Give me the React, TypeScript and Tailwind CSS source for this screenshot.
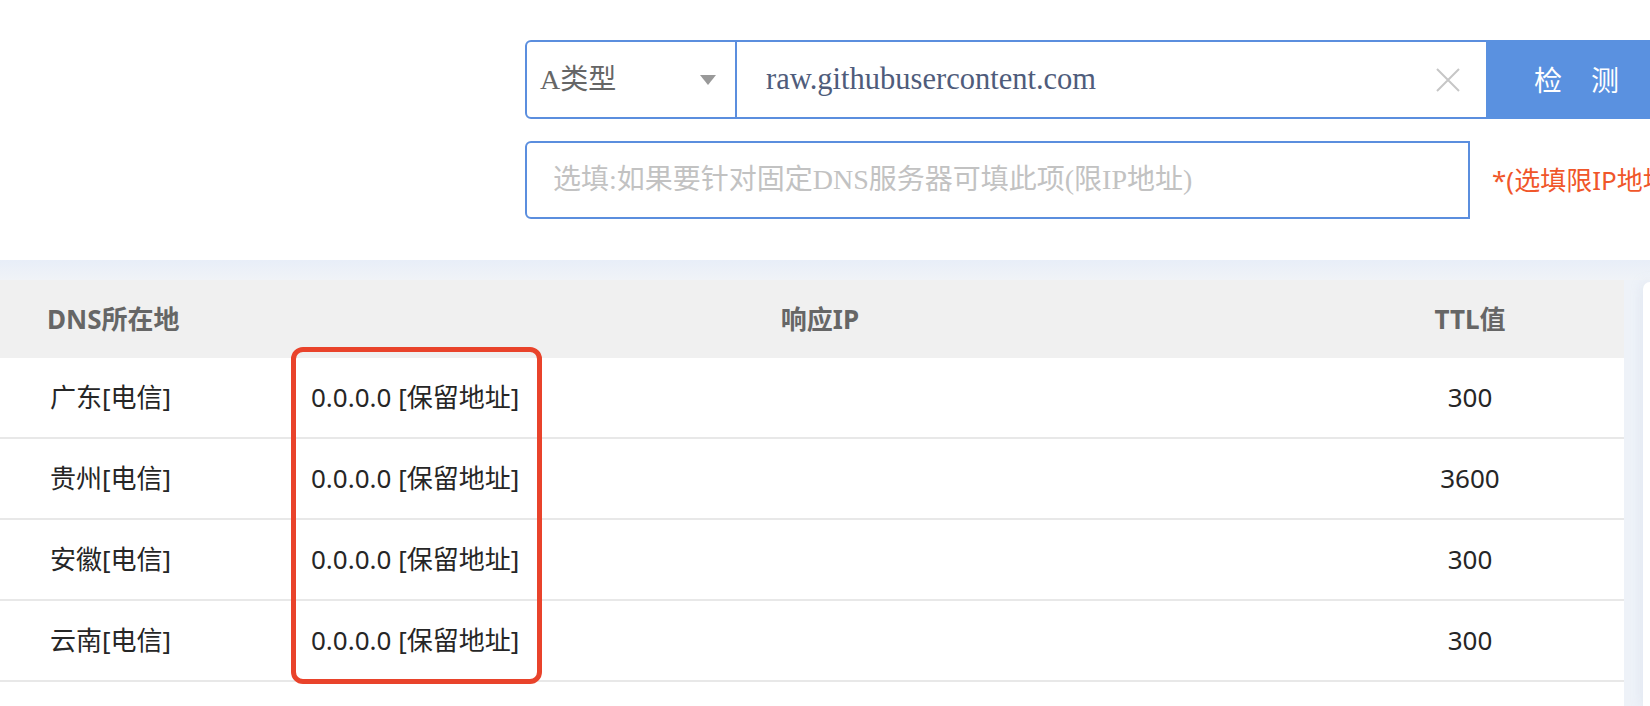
const rows = [
  { place: '广东[电信]', ip: '0.0.0.0 [保留地址]', ttl: '300' },
  { place: '贵州[电信]', ip: '0.0.0.0 [保留地址]', ttl: '3600' },
  { place: '安徽[电信]', ip: '0.0.0.0 [保留地址]', ttl: '300' },
  { place: '云南[电信]', ip: '0.0.0.0 [保留地址]', ttl: '300' },
];

const serif = 'font-["Liberation_Serif","Noto_Sans_CJK_SC",serif]';
const sans = 'font-["Noto_Sans","Noto_Sans_CJK_SC",sans-serif]';

function SearchForm() {
  return (
    <section className="h-[260px] shrink-0 bg-white pl-[525px] pt-[40px]">
      <div className="flex h-[79px]">
        <div
          className={`flex w-[212px] shrink-0 items-center justify-between rounded-l-[6px] border-2 border-[#5b8ede] pl-[13px] pr-[19px] text-[28px] text-[#666] ${serif}`}
        >
          <span>A类型</span>
          <svg width="16" height="10" viewBox="0 0 16 10" aria-hidden>
            <path d="M0 0h16L8 10z" fill="#999" />
          </svg>
        </div>
        <div className="flex w-[749px] shrink-0 items-center justify-between border-y-2 border-[#5b8ede] pl-[29px] pr-[26px]">
          <span className={`text-[30.5px] text-[#4f5c7b] ${serif}`}>raw.githubusercontent.com</span>
          <svg width="24" height="24" viewBox="0 0 24 24" aria-hidden>
            <path d="M1 1L23 23M23 1L1 23" stroke="#c6c6c6" strokeWidth="2" />
          </svg>
        </div>
        <button
          className={`flex w-[180px] shrink-0 items-center gap-[29px] bg-[#5a91e0] pl-[48px] text-[28px] text-white ${sans}`}
        >
          <span>检</span>
          <span>测</span>
        </button>
      </div>

      <div className="mt-[22px] flex items-center">
        <div
          className={`flex h-[78px] w-[945px] shrink-0 items-center rounded-l-[6px] border-2 border-[#5b8ede] pl-[26px] text-[28px] text-[#c2c2c2] ${serif}`}
        >
          选填:如果要针对固定DNS服务器可填此项(限IP地址)
        </div>
        <span className={`ml-[22px] whitespace-nowrap text-[26px] text-[#f0562a] ${sans}`}>
          *(选填限IP地址)
        </span>
      </div>
    </section>
  );
}

function ResultTable() {
  return (
    <div className={`w-[1624px] shrink-0 bg-white ${sans}`}>
      <div className="flex h-[78px] items-center bg-[#f0f0f0] text-[26px] font-bold text-[#666]">
        <div className="w-[310px] pl-[47px]">DNS所在地</div>
        <div className="w-[1006px] pl-[14px] text-center">响应IP</div>
        <div className="w-[308px] text-center">TTL值</div>
      </div>
      {rows.map((row) => (
        <div
          key={row.place + row.ttl}
          className="flex h-[81px] items-center border-b-2 border-[#e8e8e8] text-[26px] text-[#262626]"
        >
          <div className="w-[310px] pl-[50px]">{row.place}</div>
          <div className="w-[1006px] pl-[1px]">{row.ip}</div>
          <div className="w-[308px] text-center">{row.ttl}</div>
        </div>
      ))}
    </div>
  );
}

export default function App() {
  return (
    <div className="relative flex h-[706px] w-[1650px] flex-col overflow-hidden bg-[#eef2f8]">
      <SearchForm />
      <div className="h-[20px] shrink-0 bg-gradient-to-b from-[#e8eef8] to-[#f0f3f7]" />
      <div className="flex flex-1 gap-[19px]">
        <ResultTable />
        <div className="mt-[2px] flex-1 rounded-tl-[8px] bg-white shadow-[0_0_12px_rgba(180,195,220,0.35)]" />
      </div>

      <div className="absolute left-[291px] top-[347px] h-[337px] w-[251px] rounded-[12px] border-[5px] border-[#e9432b]" />
    </div>
  );
}
